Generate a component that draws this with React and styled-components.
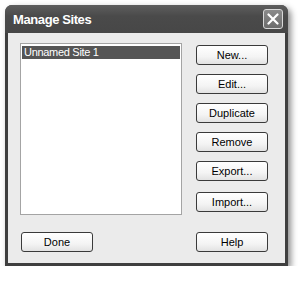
import React from "react";
import styled, { createGlobalStyle } from "styled-components";

const GlobalStyle = createGlobalStyle`
  body {
    margin: 0;
    background: #ffffff;
    font-family: "Liberation Sans", Arial, sans-serif;
  }
`;

const Window = styled.div`
  margin: 5px 0 0 5px;
  width: 283px;
  height: 261px;
  display: flex;
  flex-direction: column;
  background: #3f3f3f;
  border-radius: 7px 7px 0 0;
  box-shadow: 3px 3px 6px rgba(0, 0, 0, 0.45);
  box-sizing: border-box;
`;

const TitleBar = styled.div`
  height: 28px;
  display: flex;
  align-items: center;
  justify-content: space-between;
  padding: 0 5px 0 8px;
  border-radius: 7px 7px 0 0;
  background: linear-gradient(#5e5e5e, #4a4a4a 40%, #474747);
`;

const Title = styled.div`
  color: #ffffff;
  font-weight: bold;
  font-size: 13px;
  letter-spacing: -0.4px;
  padding-top: 1px;
`;

const CloseButton = styled.div`
  width: 20px;
  height: 20px;
  box-sizing: border-box;
  border: 1px solid #d8d8d8;
  border-radius: 3px;
  background: linear-gradient(#8a8a8a, #6c6c6c);
  display: flex;
  align-items: center;
  justify-content: center;
`;

const Body = styled.div`
  flex: 1;
  margin: 0 3px 3px 3px;
  background: #ebebeb;
  display: grid;
  grid-template-columns: 162px 72px;
  grid-template-rows: 172px 20px;
  column-gap: 14px;
  row-gap: 17px;
  padding: 10px 0 0 12px;
`;

const SiteList = styled.div`
  background: #ffffff;
  border: 1px solid #a4a4a4;
  padding: 2px 1px;
`;

const SiteRow = styled.div`
  height: 13px;
  line-height: 13px;
  padding-left: 2px;
  font-size: 11px;
  letter-spacing: -0.3px;
  color: ${(p) => (p.$selected ? "#ffffff" : "#000000")};
  background: ${(p) => (p.$selected ? "#555555" : "transparent")};
`;

const ButtonColumn = styled.div`
  display: flex;
  flex-direction: column;
  gap: 9px;
  padding-top: 2px;
`;

const Button = styled.div`
  width: 72px;
  height: 20px;
  box-sizing: border-box;
  margin-top: ${(p) => p.$push || 0}px;
  border: 1px solid #3a3a3a;
  border-radius: 3px;
  background: linear-gradient(#ffffff, #f4f4f4 60%, #e2e2e2);
  display: flex;
  align-items: center;
  justify-content: center;
  font-size: 11px;
  color: #000000;
`;

const Footer = styled.div`
  padding-left: 1px;
`;

const buttons = ["New...", "Edit...", "Duplicate", "Remove", "Export...", "Import..."];

const App = () => {
  return (
    <>
      <GlobalStyle />
      <Window>
        <TitleBar>
          <Title>Manage Sites</Title>
          <CloseButton>
            <svg width="12" height="12" viewBox="0 0 12 12">
              <path d="M1.5 1.5 L10.5 10.5 M10.5 1.5 L1.5 10.5" stroke="#ffffff" strokeWidth="2.2" strokeLinecap="round" />
            </svg>
          </CloseButton>
        </TitleBar>
        <Body>
          <SiteList>
            <SiteRow $selected>Unnamed Site 1</SiteRow>
          </SiteList>
          <ButtonColumn>
            {buttons.map((b) => (
              <Button key={b} $push={b === "Import..." ? 2 : 0}>
                {b}
              </Button>
            ))}
          </ButtonColumn>
          <Footer>
            <Button>Done</Button>
          </Footer>
          <Button>Help</Button>
        </Body>
      </Window>
    </>
  );
};

export default App;
